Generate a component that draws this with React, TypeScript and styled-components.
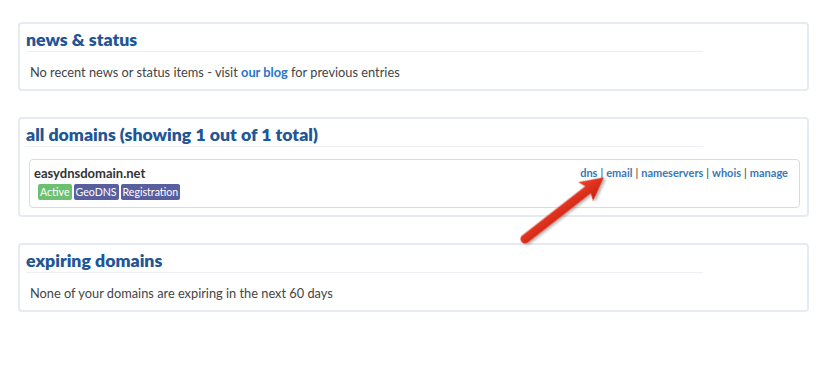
import React from "react";
import styled, { createGlobalStyle } from "styled-components";

const Global = createGlobalStyle`
  html, body { margin: 0; padding: 0; background: #ffffff; }
  body { font-family: Lato, "Open Sans", Arial, sans-serif; color: #444; }
`;

const Page = styled.div`
  position: relative;
  width: 832px;
  height: 383px;
  padding: 22px 23px 0 18px;
  box-sizing: border-box;
  display: flex;
  flex-direction: column;
  gap: 26px;
`;

const Panel = styled.section`
  border: 2px solid #e6ebf2;
  border-radius: 4px;
  padding: 0 6px;
  background: #fff;
`;

const Heading = styled.h2`
  margin: 0;
  width: 677px;
  padding: 6px 0 1px;
  font-size: 17.7px;
  line-height: 20px;
  font-weight: 800;
  color: #215595;
  border-bottom: 1px solid #eceff3;
`;

const Body = styled.p`
  margin: 0;
  padding: 12px 4px 9px;
  font-size: 12.8px;
  line-height: 16px;
  color: #444;
`;

const BlogLink = styled.a`
  color: #2a74c9;
  font-weight: 700;
  text-decoration: none;
`;

const DomainList = styled.div`
  padding: 12px 1px 7px 3px;
`;

const DomainRow = styled.div`
  border: 1px solid #d6dbe9;
  border-radius: 4px;
  padding: 5px 11px 7px 4px;
  display: flex;
  justify-content: space-between;
  align-items: flex-start;
`;

const DomainInfo = styled.div`
  display: flex;
  flex-direction: column;
  gap: 3px;
`;

const DomainName = styled.div`
  font-size: 13px;
  line-height: 16px;
  font-weight: 700;
  color: #333;
`;

const Badges = styled.div`
  display: flex;
  gap: 2px;
  padding-left: 4px;
`;

const Badge = styled.span<{ $tone: "green" | "purple" }>`
  display: inline-block;
  height: 16px;
  line-height: 16px;
  padding: 0 2px;
  border-radius: 2px;
  font-size: 10.6px;
  color: #fff;
  background: ${(p) => (p.$tone === "green" ? "#6cc070" : "#585e9e")};
`;

const Links = styled.div`
  font-size: 11px;
  line-height: 14px;
  font-weight: 700;
  color: #333;
  padding-top: 1px;
  display: flex;
  gap: 3px;
`;

const ActionLink = styled.a`
  color: #3a78b6;
  text-decoration: none;
`;

const Sep = styled.span`
  font-weight: 400;
  color: #333;
`;

const ArrowLayer = styled.svg`
  position: absolute;
  left: 0;
  top: 0;
  pointer-events: none;
  overflow: visible;
`;

function Arrow() {
  return (
    <ArrowLayer width={832} height={383}>
      <defs>
        <linearGradient id="ag" x1="0" y1="0" x2="0" y2="1">
          <stop offset="0" stopColor="#f0402a" />
          <stop offset="1" stopColor="#c92010" />
        </linearGradient>
        <filter id="sh" x="-20%" y="-20%" width="140%" height="160%">
          <feDropShadow dx="1" dy="2" stdDeviation="1.5" floodColor="#000" floodOpacity="0.35" />
        </filter>
      </defs>
      <g transform="translate(525 239) rotate(-38)" filter="url(#sh)">
        <path
          d="M0 -4.5 L80 -4.5 L77 -12 L100 0 L77 12 L80 4.5 L0 4.5 A4.5 4.5 0 0 1 0 -4.5 Z"
          fill="url(#ag)"
        />
      </g>
    </ArrowLayer>
  );
}

const links = ["dns", "email", "nameservers", "whois", "manage"];

export default function App() {
  return (
    <>
      <Global />
      <Page>
        <Panel>
          <Heading>news &amp; status</Heading>
          <Body>
            No recent news or status items - visit <BlogLink href="#">our blog</BlogLink> for
            previous entries
          </Body>
        </Panel>
        <Panel>
          <Heading>all domains (showing 1 out of 1 total)</Heading>
          <DomainList>
            <DomainRow>
              <DomainInfo>
                <DomainName>easydnsdomain.net</DomainName>
                <Badges>
                  <Badge $tone="green">Active</Badge>
                  <Badge $tone="purple">GeoDNS</Badge>
                  <Badge $tone="purple">Registration</Badge>
                </Badges>
              </DomainInfo>
              <Links>
                {links.map((l, i) => (
                  <React.Fragment key={l}>
                    {i > 0 && <Sep>|</Sep>}
                    <ActionLink href="#">{l}</ActionLink>
                  </React.Fragment>
                ))}
              </Links>
            </DomainRow>
          </DomainList>
        </Panel>
        <Panel>
          <Heading>expiring domains</Heading>
          <Body>None of your domains are expiring in the next 60 days</Body>
        </Panel>
        <Arrow />
      </Page>
    </>
  );
}
